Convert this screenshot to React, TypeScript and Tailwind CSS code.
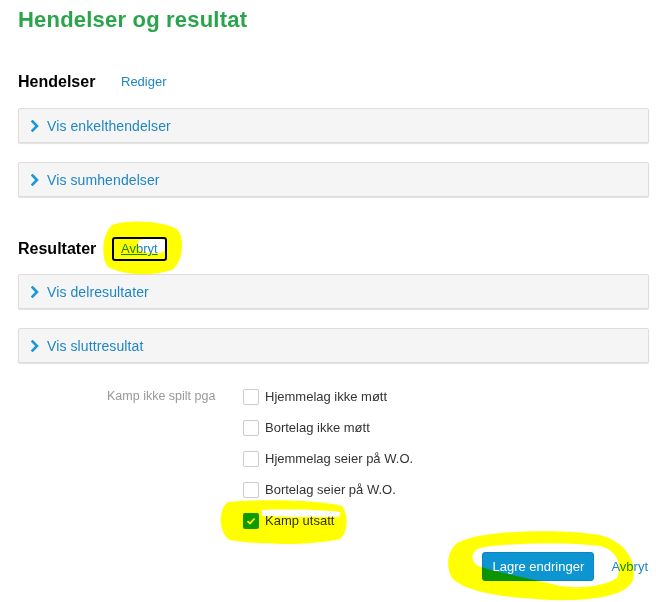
import React from "react";

const Chevron = () => (
  <svg width="8" height="12" viewBox="0 0 8 12" className="shrink-0">
    <polyline points="1.5,1.5 6,6 1.5,10.5" fill="none" stroke="#1a98d5" strokeWidth="2.6" strokeLinecap="square" />
  </svg>
);

const Panel = ({ label, className = "" }: { label: string; className?: string }) => (
  <div
    className={
      "h-[35px] flex items-center pl-[12px] gap-[8px] bg-[#f5f5f5] border border-[#dddddd] rounded-[2px] shadow-[0_1px_1px_rgba(0,0,0,0.12)] " +
      className
    }
  >
    <Chevron />
    <span className="text-[14px] tracking-[0.1px] text-[#1f86c4] leading-none">{label}</span>
  </div>
);

const Box = ({ checked = false }: { checked?: boolean }) =>
  checked ? (
    <span className="w-[16px] h-[16px] rounded-[2px] bg-[#0f98d8] flex items-center justify-center shrink-0">
      <svg width="10" height="10" viewBox="0 0 10 10">
        <polyline points="1.5,5.2 4,7.5 8.5,2.5" fill="none" stroke="#ffffff" strokeWidth="1.8" />
      </svg>
    </span>
  ) : (
    <span className="w-[16px] h-[16px] rounded-[2px] bg-white border border-[#cccccc] shrink-0" />
  );

const options = [
  { label: "Hjemmelag ikke møtt", checked: false },
  { label: "Bortelag ikke møtt", checked: false },
  { label: "Hjemmelag seier på W.O.", checked: false },
  { label: "Bortelag seier på W.O.", checked: false },
  { label: "Kamp utsatt", checked: true },
];

export default function App() {
  return (
    <div
      className="relative w-[656px] h-[602px] bg-white overflow-hidden"
      style={{ fontFamily: '"Liberation Sans", Arial, sans-serif' }}
    >
      <div className="pl-[18px] pr-[7px] pt-[8px]">
        <h1 className="text-[22px] tracking-[0.2px] leading-[24px] font-bold text-[#2aa54b]">Hendelser og resultat</h1>

        <div className="mt-[38px] h-[24px] flex items-center">
          <span className="w-[94px] text-[16px] font-bold text-black">Hendelser</span>
          <span className="border-2 border-transparent rounded-[3px] px-[7px] text-[13px] leading-[20px] text-[#1f86c4]">
            Rediger
          </span>
        </div>

        <Panel label="Vis enkelthendelser" className="mt-[14px]" />
        <Panel label="Vis sumhendelser" className="mt-[19px]" />

        <div className="mt-[40px] h-[24px] flex items-center">
          <span className="w-[94px] text-[16px] font-bold text-black">Resultater</span>
          <span className="border-2 border-black rounded-[3px] px-[7px] text-[13px] leading-[20px] text-[#1f86c4] underline">
            Avbryt
          </span>
        </div>

        <Panel label="Vis delresultater" className="mt-[13px]" />
        <Panel label="Vis sluttresultat" className="mt-[19px]" />

        <div className="mt-[18px] flex">
          <div className="w-[225px] pl-[89px] h-[31px] flex items-center text-[12.5px] text-[#999999]">
            Kamp ikke spilt pga
          </div>
          <div className="flex flex-col">
            {options.map((o) => (
              <div key={o.label} className="h-[31px] flex items-center gap-[6px]">
                <Box checked={o.checked} />
                <span className="text-[13px] text-[#333333]">{o.label}</span>
              </div>
            ))}
          </div>
        </div>

        <div className="mt-[16px] flex items-center justify-end gap-[17px]">
          <button className="w-[112px] h-[29px] rounded-[3px] bg-[#0d95d2] text-white text-[13px] border border-[#0a86bf]">
            Lagre endringer
          </button>
          <span className="text-[13px] text-[#1f86c4] pr-[1px]">Avbryt</span>
        </div>
      </div>

      <svg className="absolute inset-0 pointer-events-none mix-blend-multiply" width="656" height="602">
        <path
          fill="#ffff00"
          fillRule="evenodd"
          d="M 112 225 C 130 219, 165 221, 178 230 C 185 240, 183 262, 172 270 C 150 277, 120 275, 107 266 C 101 255, 102 235, 112 225 Z M 140 240 C 148 238, 160 238, 166 241 C 168 247, 166 251, 160 253 C 152 254, 145 253, 140 251 C 137 247, 137 242, 140 240 Z"
        />
        <path
          fill="#ffff00"
          fillRule="evenodd"
          d="M 228 502 C 260 499, 320 500, 342 506 C 349 515, 348 532, 340 539 C 310 546, 260 545, 230 540 C 219 534, 217 510, 228 502 Z M 262 510 C 290 509, 325 510, 340 512 C 341 515, 340 516, 338 517 C 310 517, 285 517, 262 516 Z"
        />
        <path
          fill="#ffff00"
          fillRule="evenodd"
          d="M 455 545 C 470 530, 560 528, 600 535 C 625 542, 637 560, 633 580 C 626 597, 590 601, 550 600 C 505 598, 465 592, 452 578 C 446 568, 447 553, 455 545 Z M 480 548 C 500 543, 570 542, 600 546 C 617 550, 623 565, 617 578 C 602 588, 572 589, 556 585 C 530 579, 500 573, 478 566 C 470 561, 471 551, 480 548 Z"
        />
      </svg>
    </div>
  );
}
